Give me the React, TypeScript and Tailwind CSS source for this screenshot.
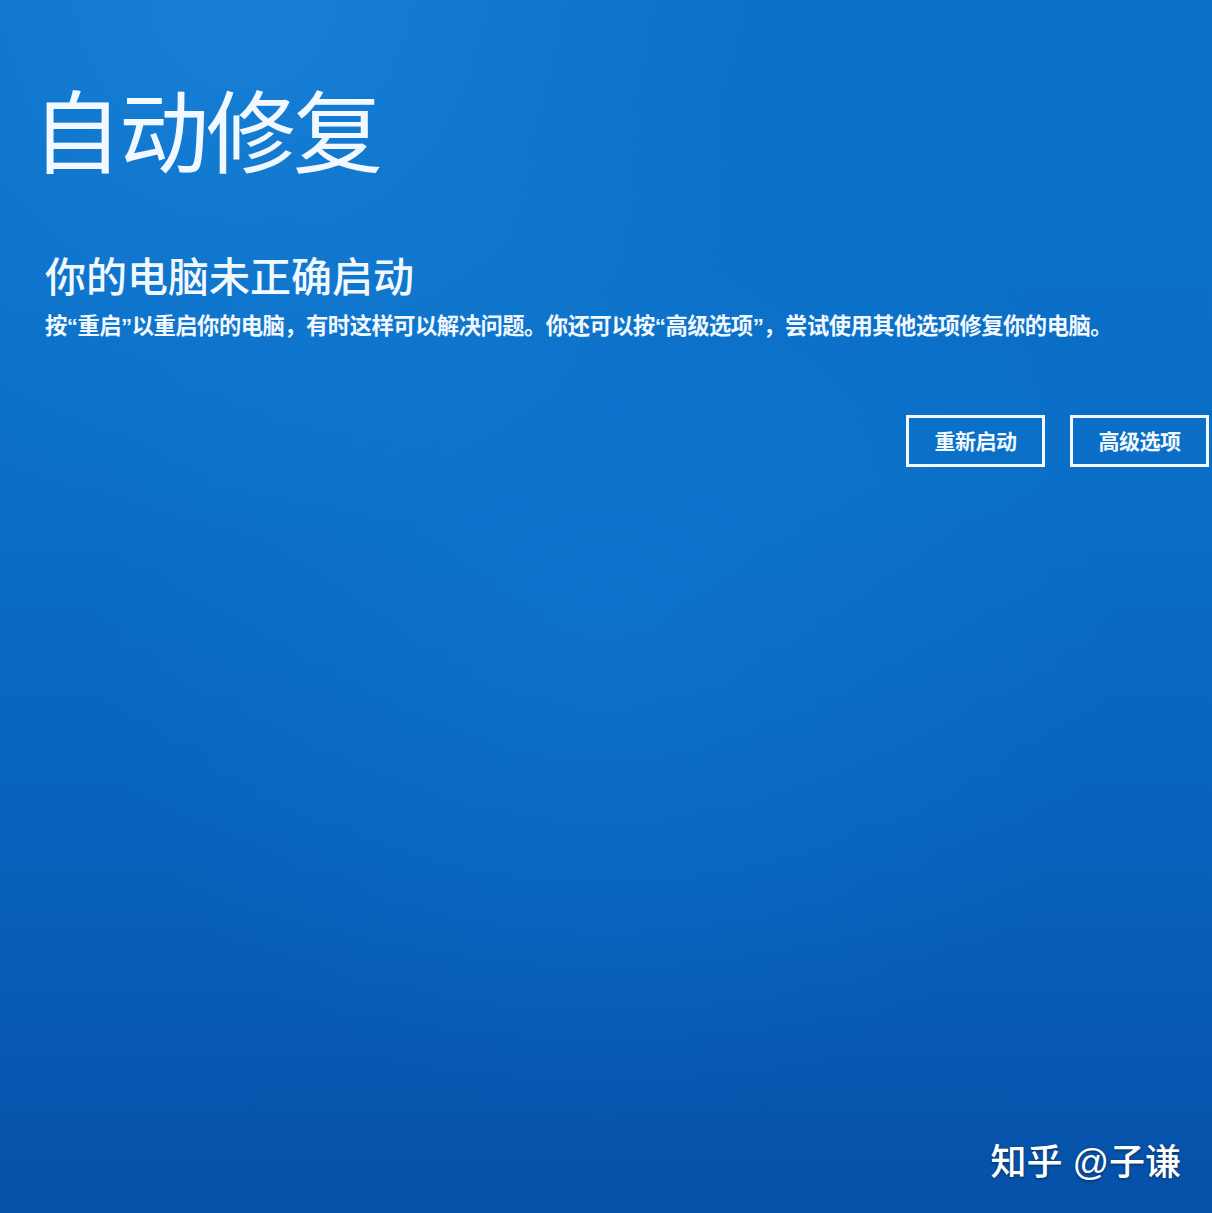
export default function App() {
  return (
    <div
      className="relative flex h-[1213px] w-[1212px] flex-col overflow-hidden bg-[radial-gradient(circle_at_20%_0%,rgba(40,150,232,0.4)_0%,transparent_35%),radial-gradient(ellipse_at_50%_50%,rgba(20,130,220,0.35)_0%,transparent_60%),linear-gradient(to_bottom,#0b70c8_0%,#0a6ec6_40%,#085fb8_75%,#0650a8_100%)] pl-[38px] pr-[3px] text-[#f2f8ff]"
      style={{ fontFamily: '"Liberation Sans", "Noto Sans CJK SC", sans-serif' }}
    >
      {/* Title */}
      <h1 className="-ml-[6px] mt-[90px] text-[90px] font-normal leading-none tracking-[-3px]">自动修复</h1>

      {/* Message */}
      <div className="mt-[78px] pl-[7px]">
        <h2 className="text-[41px] font-medium leading-none">你的电脑未正确启动</h2>
        <p className="mt-[17px] text-[22.3px] font-bold leading-none tracking-[-0.5px]">
          按“重启”以重启你的电脑，有时这样可以解决问题。你还可以按“高级选项”，尝试使用其他选项修复你的电脑。
        </p>
      </div>

      {/* Buttons */}
      <div className="mt-[77px] flex justify-end gap-[25px]">
        <button className="h-[52px] w-[139px] border-[3px] border-[#f2f8ff] text-[21px] font-bold tracking-[-0.5px]">
          重新启动
        </button>
        <button className="h-[52px] w-[139px] border-[3px] border-[#f2f8ff] text-[21px] font-bold tracking-[-0.5px]">
          高级选项
        </button>
      </div>

      {/* Watermark */}
      <div className="absolute bottom-[32px] right-[31px] text-[36px] font-medium leading-none text-white [text-shadow:0_1px_3px_rgba(0,0,0,0.45)]">
        知乎 @子谦
      </div>
    </div>
  )
}
